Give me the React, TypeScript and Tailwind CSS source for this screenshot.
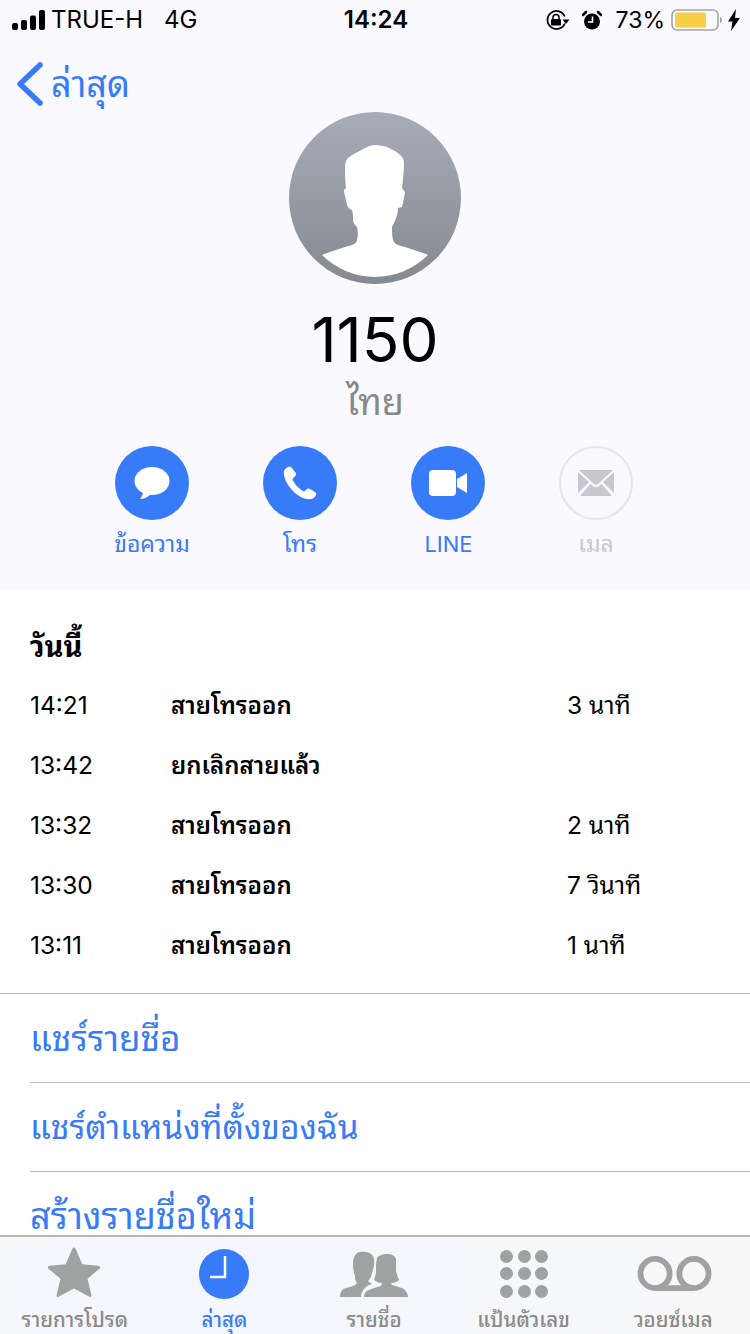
const FONT = "font-['Inter','Noto_Sans_Thai_Looped','Thonburi','Loma','Garuda','Noto_Sans','DejaVu_Sans',sans-serif]";

function Signal() {
  return (
    <svg width="34" height="20" viewBox="0 0 34 20" fill="#000">
      <rect x="0" y="13" width="6" height="7" rx="2" />
      <rect x="9" y="10" width="6" height="10" rx="2" />
      <rect x="18" y="5.500" width="6" height="14.500" rx="2" />
      <rect x="27" y="0" width="6" height="20" rx="2" />
    </svg>
  );
}

function Lock() {
  return (
    <svg width="24" height="20" viewBox="0 0 24 20">
      <path d="M18.800 13.500A9 9 0 1 1 18.800 6.500" fill="none" stroke="#000" strokeWidth="1.800" />
      <path d="M16.500 9.500h7L20 14z" fill="#000" />
      <rect x="5" y="9" width="10" height="6.500" rx="1" fill="#000" />
      <path d="M7 9V7.500a3 3 0 0 1 6 0V9" fill="none" stroke="#000" strokeWidth="1.500" />
    </svg>
  );
}

function Alarm() {
  return (
    <svg width="20" height="20" viewBox="0 0 20 20">
      <circle cx="10" cy="11.500" r="8" fill="#000" />
      <path d="M1 5 4 2 M19 5 16 2" stroke="#000" strokeWidth="2.500" strokeLinecap="round" />
      <path d="M10.500 6.500v5.500H6" fill="none" stroke="#fff" strokeWidth="1.600" />
    </svg>
  );
}

function Battery() {
  return (
    <svg width="51" height="24" viewBox="0 0 51 24">
      <rect x="1" y="2" width="46" height="20" rx="5" fill="none" stroke="#a3a3a3" strokeWidth="1.600" />
      <rect x="4" y="4.500" width="31" height="15" rx="1.500" fill="#f7cf46" />
      <path d="M49 9c1.400.5 2 1.500 2 3s-.6 2.500-2 3z" fill="#a3a3a3" />
    </svg>
  );
}

function Bolt() {
  return (
    <svg width="12" height="22" viewBox="0 0 12 22">
      <path d="M8 0 0 12.500h4.500L3 22l9-13H7z" fill="#000" />
    </svg>
  );
}

function Avatar() {
  return (
    <svg width="172" height="172" viewBox="0 0 172 172">
      <defs>
        <linearGradient id="av" x1="0" y1="0" x2="0" y2="1">
          <stop offset="0" stopColor="#a8acb9" />
          <stop offset="1" stopColor="#858991" />
        </linearGradient>
      </defs>
      <circle cx="86" cy="86" r="86" fill="url(#av)" />
      <path
        fill="#fff"
        d="M33 143C42 139 53 136 63 133C66 132 68 130 68 128C69 124 69 119 68 115C65 112 64 110 64 108C64 104 64 101 63 98C60 97 58 95 57 88C56 84 55 81 55 78L57 76C56 68 56 62 56 56C56 51 57 48 59 46C63 43 66 41 69 40C74 37 80 33 86 33C90 33 94 34 98 35C102 37 106 39 109 41C113 44 115 47 115 51C115 60 114 68 113 76L116 80C115 86 114 91 113 95L109 96C109 100 108 103 107 106C106 110 104 112 103 115C103 119 103 124 104 128C105 131 107 132 109 133C119 136 130 139 139 143A75 75 0 0 1 33 143Z"
      />
    </svg>
  );
}

function Action({ label, off, latin, children }: { label: string; off?: boolean; latin?: boolean; children: React.ReactNode }) {
  return (
    <div className="flex w-[148px] flex-col items-center">
      <div className={off ? "flex h-[74px] w-[74px] items-center justify-center rounded-full border-2 border-[#e5e5ea]" : "flex h-[74px] w-[74px] items-center justify-center rounded-full bg-[#387bf8]"}>
        {children}
      </div>
      <div
        className={
          off
            ? "mt-[9px] text-[23px] leading-[30px] text-[#c9c9ce]"
            : latin
              ? "mt-[9px] pl-[1px] text-[22px] leading-[30px] text-[#387bf8]"
              : "mt-[9px] text-[23px] leading-[30px] text-[#387bf8]"
        }
      >
        {label}
      </div>
    </div>
  );
}

function CallRow({ time, kind, dur }: { time: string; kind: string; dur?: string }) {
  return (
    <div className="flex h-[60px] items-center text-[24.5px] text-black">
      <div className="mb-[2px] w-[141px]">{time}</div>
      <div className="w-[396px] text-[24px] font-semibold">{kind}</div>
      <div className="mb-[2px]">{dur}</div>
    </div>
  );
}

function Tab({ label, active, children }: { label: string; active?: boolean; children: React.ReactNode }) {
  return (
    <div className="flex flex-1 flex-col items-center pt-[4px]">
      <div className="flex h-[65px] items-center justify-center">{children}</div>
      <div className={active ? "text-[20.5px] font-medium leading-[28px] text-[#387bf8]" : "text-[20.5px] font-medium leading-[28px] text-[#8a8a8a]"}>{label}</div>
    </div>
  );
}

export default function App() {
  return (
    <div className={`${FONT} flex h-[1334px] w-[750px] flex-col overflow-hidden bg-white`}>
      <div className="h-[589px] shrink-0 bg-[#f9f9ff]">
        <div className="flex h-[40px] items-center justify-between pl-[12px] pr-[10px] text-[24px] text-black">
          <div className="flex w-[300px] items-center gap-[5px]">
            <Signal />
            <span>TRUE-H</span>
            <span className="ml-[16px]">4G</span>
          </div>
          <div className="font-semibold">14:24</div>
          <div className="flex w-[300px] items-center justify-end">
            <Lock />
            <span className="ml-[12px] flex"><Alarm /></span>
            <span className="ml-[14px] text-[23px]">73%</span>
            <span className="ml-[6px] flex"><Battery /></span>
            <span className="ml-[6px] flex"><Bolt /></span>
          </div>
        </div>
        <div className="flex h-[72px] items-center pl-[17px] pt-[16px] text-[36px] text-[#387bf8]">
          <svg width="26" height="44" viewBox="0 0 26 44" fill="none">
            <path d="M23 3 3 22l20 19" stroke="#387bf8" strokeWidth="5.500" strokeLinecap="round" strokeLinejoin="round" />
          </svg>
          <span className="ml-[8px]">ล่าสุด</span>
        </div>
        <div className="flex flex-col items-center">
          <Avatar />
          <div className="mt-[18px] text-[62px] leading-[76px] text-black">1150</div>
          <div className="text-[36px] leading-[48px] text-[#888888]">ไทย</div>
          <div className="mr-[2px] mt-[20px] flex">
            <Action label="ข้อความ">
              <svg width="36" height="33" viewBox="0 0 36 33" fill="#fff">
                <ellipse cx="18" cy="14" rx="17.500" ry="14" />
                <path d="M9 24c0 3-1 6-3 8 4 0 8-2 11-5z" />
              </svg>
            </Action>
            <Action label="โทร">
              <svg width="34" height="34" viewBox="0 0 34 34" fill="#fff">
                <path d="M5 1C3 2 0 4 1 9c1 7 6 13 11 18 5 4 11 7 16 6 2 0 4-2 5-4 .5-1 0-2-1-3l-5-3c-1-.7-2-.7-3 0l-2 2c-1 .5-2 .3-3-.5-4-3-7-6-9-10-.5-1-.5-2 .3-2.500l2-2c.8-1 1-2 .5-3L9 2C8 1 6 .5 5 1z" />
              </svg>
            </Action>
            <Action label="LINE" latin>
              <svg width="38" height="26" viewBox="0 0 38 26" fill="#fff">
                <rect x="0" y="0" width="27" height="26" rx="4" />
                <path d="M28 9 38 3v20L28 17z" />
              </svg>
            </Action>
            <Action label="เมล" off>
              <svg width="36" height="26" viewBox="0 0 36 26" fill="#c7c7cc">
                <path d="M1 0h34L20 14c-1 1-3 1-4 0z" />
                <path d="M0 2v21l11-11zM36 2v21L25 12z" />
                <path d="M2 26 12.500 14l3 2.500c1.500 1 3.500 1 5 0l3-2.500L34 26z" />
              </svg>
            </Action>
          </div>
        </div>
      </div>

      <div className="min-h-0 flex-1 pt-[36px]">
        <div className="px-[30px]">
          <div className="text-[29px] font-bold leading-[44px] text-black">วันนี้</div>
          <div className="mt-[7px]">
            <CallRow time="14:21" kind="สายโทรออก" dur="3 นาที" />
            <CallRow time="13:42" kind="ยกเลิกสายแล้ว" />
            <CallRow time="13:32" kind="สายโทรออก" dur="2 นาที" />
            <CallRow time="13:30" kind="สายโทรออก" dur="7 วินาที" />
            <CallRow time="13:11" kind="สายโทรออก" dur="1 นาที" />
          </div>
        </div>
        <div className="mt-[17px] border-t border-[#bcbcc0] pl-[30px] text-[#387bf8]">
          <div className="flex h-[89px] items-center border-b border-[#bcbcc0] text-[35px]">แชร์รายชื่อ</div>
          <div className="flex h-[89px] items-center border-b border-[#bcbcc0] text-[33.500px]">แชร์ตำแหน่งที่ตั้งของฉัน</div>
          <div className="pt-[25px] text-[36px] leading-[38px]">สร้างรายชื่อใหม่</div>
        </div>
      </div>

      <div className="flex h-[99px] shrink-0 border-t-2 border-[#b4b4b4] bg-linear-to-r from-[#f6f7fb] via-[#f3f6fd] via-35% to-[#f8f8f8] pr-[2px]">
        <Tab label="รายการโปรด">
          <svg width="54" height="51" viewBox="0 0 56 52" fill="#a0a1a1" className="mb-[3px] mr-[1px]">
            <path d="M28 0c1 0 1.500 1 2 2l6.500 15.500L53 19c2 .2 3 1.500 1.500 3L42 32.500 46 49c.4 2-1 3-2.500 2L28 42.500 12.500 51c-1.500 1-3 0-2.500-2l4-16.500L1.500 22C0 20.500 1 19.200 3 19l16.500-1.500L26 2c.5-1 1-2 2-2z" />
          </svg>
        </Tab>
        <Tab label="ล่าสุด" active>
          <svg width="50" height="50" viewBox="0 0 50 50">
            <circle cx="25" cy="25" r="25" fill="#387bf8" />
            <path d="M26 7v21H11" fill="none" stroke="#fff" strokeWidth="2.500" />
          </svg>
        </Tab>
        <Tab label="รายชื่อ">
          <svg width="68" height="46" viewBox="0 0 68 46" fill="#a0a1a1">
            <path d="M0 46C0 41 2 38 6 37C10 36 15 35 17 32C15 29 15 27 15 25C13 20 13 15 13 10C14 4 17 .7 22 .7C29 .7 33 3 34 8C35 14 33 18 32 22C31 26 30 28 28 30L32 33C28 34 25 36 24 38C22 40 21 43 21 46Z" />
            <path d="M24 46C24 43 25 41 27 40C31 38 36 36 41 35L42 32C39 32 36 31 34 29C35 26 36 23 36 20C36 15 36 11 37 7C39 4 43 3 47 3C52 3 55 5 56 8C56 12 56 16 56 20C57 24 58 27 59 29C57 31 54 32 51 32L52 34C56 35 60 36 64 38C66 40 68 43 68 46Z" />
          </svg>
        </Tab>
        <Tab label="แป้นตัวเลข">
          <div className="grid grid-cols-3 gap-[4.500px] pl-[1px]">
            {[0, 1, 2, 3, 4, 5, 6, 7, 8].map((i) => (
              <div key={i} className="h-[13px] w-[13px] rounded-full bg-[#a0a1a1]" />
            ))}
          </div>
        </Tab>
        <Tab label="วอยซ์เมล">
          <svg width="75" height="35" viewBox="0 0 76 36" fill="none" stroke="#a0a1a1" strokeWidth="6" className="ml-[2px]">
            <circle cx="18" cy="18" r="15" />
            <circle cx="58" cy="18" r="15" />
            <path d="M18 33h40" />
          </svg>
        </Tab>
      </div>
    </div>
  );
}
